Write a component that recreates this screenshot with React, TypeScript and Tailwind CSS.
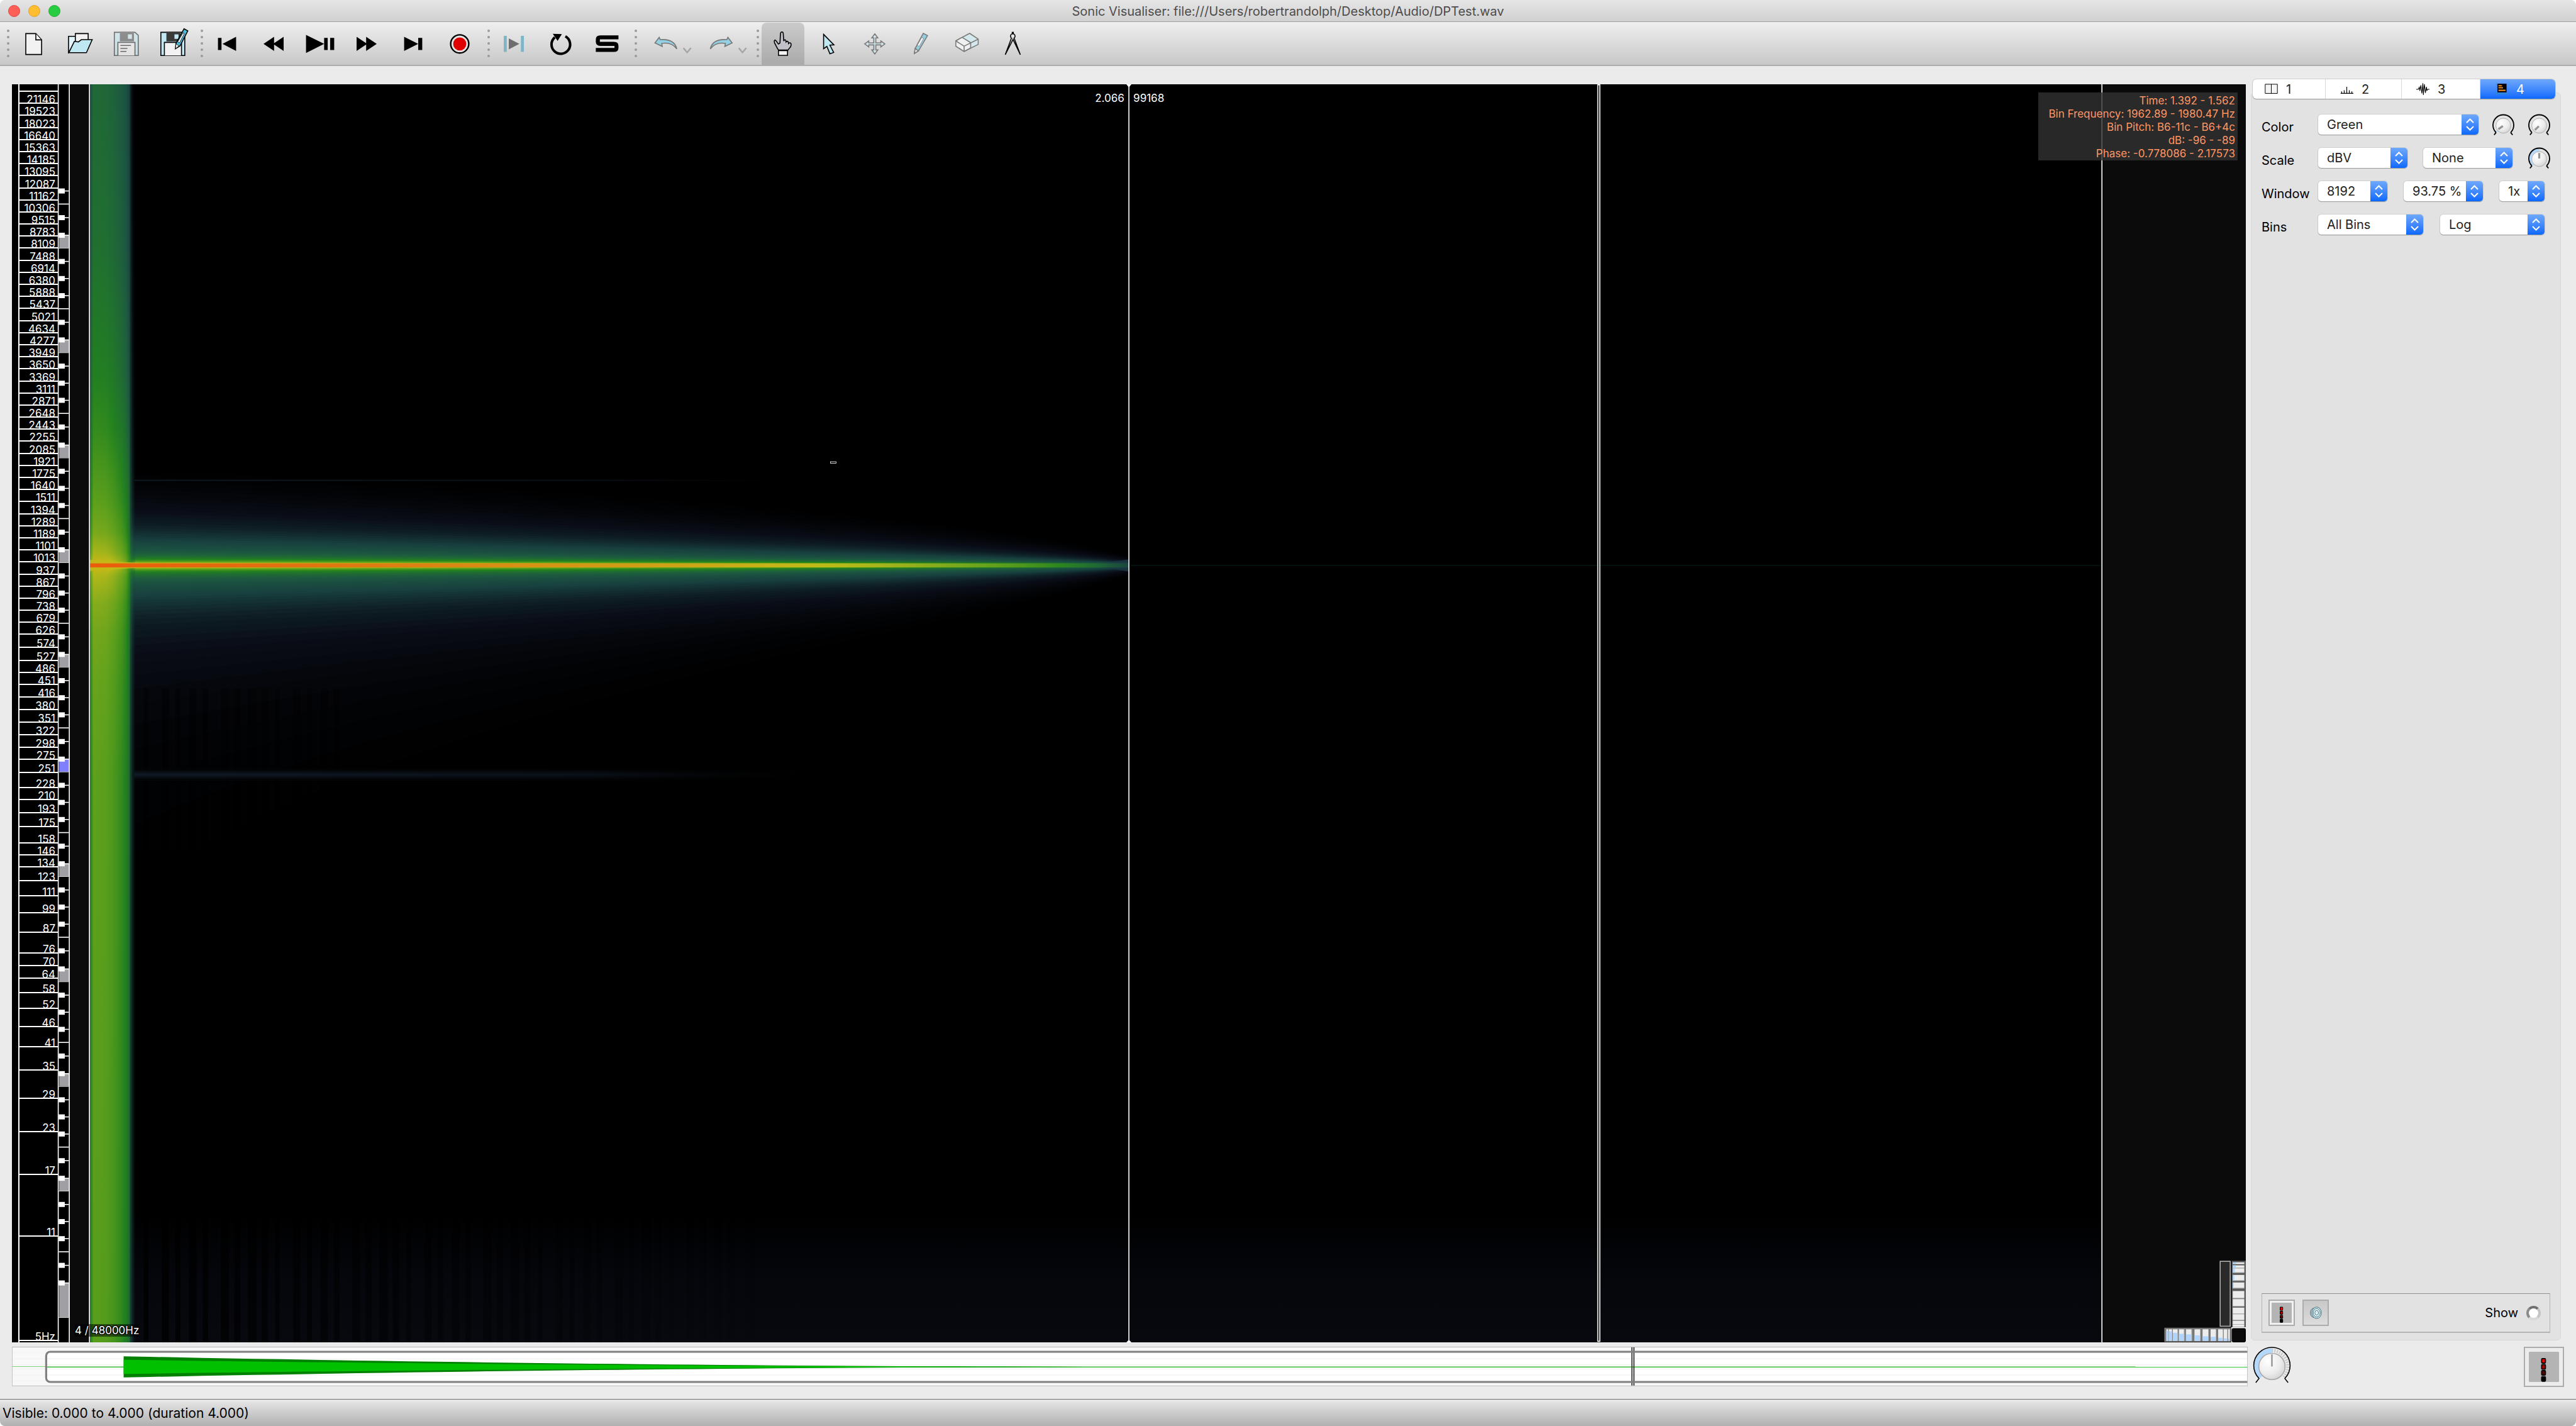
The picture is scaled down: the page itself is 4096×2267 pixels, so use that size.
import type { ReactNode } from 'react';

// Geometry of the spectrogram pane, in drawing units.
const PANE_W = 4440;
const PANE_H = 2500;
const BEAM_Y = 956;
const BEAM_START = 155;
const BEAM_END = 2220;
const OCTAVE = 208;

// [label, bottom edge of its row]
const frequencies: [string, number][] = [
  ['', 15], ['21146', 39], ['19523', 63], ['18023', 87], ['16640', 111], ['15363', 135],
  ['14185', 159], ['13095', 183], ['12087', 207], ['11162', 231], ['10306', 255], ['9515', 279],
  ['8783', 303], ['8109', 327], ['7488', 351], ['6914', 375], ['6380', 399], ['5888', 423],
  ['5437', 447], ['5021', 471], ['4634', 495], ['4277', 519], ['3949', 543], ['3650', 567],
  ['3369', 591], ['3111', 615], ['2871', 639], ['2648', 663], ['2443', 687], ['2255', 711],
  ['2085', 735], ['1921', 759], ['1775', 783], ['1640', 807], ['1511', 831], ['1394', 855],
  ['1289', 879], ['1189', 903], ['1101', 927], ['1013', 951], ['937', 975], ['867', 999],
  ['796', 1023], ['738', 1047], ['679', 1071], ['626', 1095], ['574', 1121], ['527', 1147],
  ['486', 1171], ['451', 1195], ['416', 1219], ['380', 1245], ['351', 1269], ['322', 1295],
  ['298', 1319], ['275', 1343], ['251', 1369], ['228', 1399], ['210', 1423], ['193', 1449],
  ['175', 1477], ['158', 1509], ['146', 1533], ['134', 1557], ['123', 1585], ['111', 1615],
  ['99', 1649], ['87', 1687], ['76', 1729], ['70', 1753], ['64', 1779], ['58', 1807],
  ['52', 1839], ['46', 1875], ['41', 1915], ['35', 1961], ['29', 2017], ['23', 2083],
  ['17', 2169], ['11', 2291], ['5Hz', 2499],
];

// dB -> colour
const colourStops: [number, number, number, number][] = [
  [-130, 0, 0, 0],
  [-122, 2, 3, 6],
  [-109, 10, 14, 24],
  [-100, 15, 31, 38],
  [-87, 24, 64, 63],
  [-69, 29, 90, 64],
  [-60, 32, 106, 53],
  [-49, 34, 130, 30],
  [-36, 94, 160, 28],
  [-30, 128, 170, 28],
  [-21, 192, 188, 24],
  [-9, 216, 144, 20],
  [0, 234, 92, 12],
];

function colourAt(level: number) {
  if (level <= colourStops[0][0]) return 'rgb(0,0,0)';
  for (let i = 1; i < colourStops.length; i++) {
    const [hi, r2, g2, b2] = colourStops[i];
    if (level <= hi) {
      const [lo, r1, g1, b1] = colourStops[i - 1];
      const f = (level - lo) / (hi - lo);
      const mix = (a: number, b: number) => Math.round(a + (b - a) * f);
      return `rgb(${mix(r1, r2)},${mix(g1, g2)},${mix(b1, b2)})`;
    }
  }
  return 'rgb(234,92,12)';
}

function interpolate(points: [number, number][], v: number) {
  if (v <= points[0][0]) return points[0][1];
  for (let i = 1; i < points.length; i++) {
    if (v <= points[i][0]) {
      const [x1, y1] = points[i - 1];
      const [x2, y2] = points[i];
      return y1 + ((y2 - y1) * (v - x1)) / (x2 - x1);
    }
  }
  return points[points.length - 1][1];
}

// Outline of the region around the tone that is louder than the given level
function contour(level: number) {
  const upper: string[] = [];
  const lower: string[] = [];
  const steps = 80;
  for (let i = 0; i <= steps; i++) {
    const t = Math.min(0.9995, 1 - Math.pow(1 - i / steps, 1.6));
    const x = BEAM_START + t * (BEAM_END - BEAM_START);
    const amp = 40 * Math.log10(1 - Math.max(0, t - 0.02));
    const df = Math.min(0.85, 0.043 * Math.pow(2, (amp - 49 - level) / 18));
    upper.push(`${x.toFixed(1)} ${(BEAM_Y - OCTAVE * Math.log2(1 + df)).toFixed(1)}`);
    lower.unshift(`${x.toFixed(1)} ${(BEAM_Y - OCTAVE * Math.log2(1 - df)).toFixed(1)}`);
  }
  return `M${upper.concat(lower).join('L')}Z`;
}

const onsetLevel: [number, number][] = [
  [0, -61], [332, -57], [582, -50], [682, -45], [780, -39], [832, -36], [890, -31], [932, -24],
  [948, -19], [956, -14], [964, -19], [976, -23], [1032, -29], [1090, -32], [1182, -34],
  [1382, -36], [2500, -37],
];
const onsetFade: [number, number][] = [
  [155, -14], [160, 0], [185, -1], [201, -4], [216, -9], [225, -14], [233, -26], [238, -42], [243, -66],
];

function Onset() {
  const slices = Array.from({ length: 30 }, (_, i) => 155 + i * 3);
  return (
    <g>
      <defs>
        {slices.map((x) => (
          <linearGradient key={x} id={`onset-${x}`} x1="0" y1="0" x2="0" y2={PANE_H} gradientUnits="userSpaceOnUse">
            {onsetLevel.map(([y, level]) => (
              <stop key={y} offset={y / PANE_H} stopColor={colourAt(level + interpolate(onsetFade, x))} />
            ))}
          </linearGradient>
        ))}
      </defs>
      {slices.map((x) => (
        <rect key={x} x={x} y="0" width={x > 230 ? 3 : 4} height={PANE_H} fill={`url(#onset-${x})`} opacity={x > 230 ? (245 - x) / 16 : 1} />
      ))}
    </g>
  );
}

function Beam() {
  const levels = Array.from({ length: 57 }, (_, i) => -130 + i * 2);
  const peak = Array.from({ length: 30 }, (_, i) => i / 29);
  return (
    <g>
      <defs>
        <linearGradient id="beam-peak" x1={BEAM_START} x2={BEAM_END} y1="0" y2="0" gradientUnits="userSpaceOnUse">
          {peak.map((t) => (
            <stop key={t} offset={t} stopColor={colourAt(40 * Math.log10(Math.max(0.008, 1 - t)))} />
          ))}
        </linearGradient>
        <linearGradient id="beam-tip" x1="0" x2="1">
          <stop offset="0" stopColor="#1c3a48" stopOpacity="0" />
          <stop offset="1" stopColor="#1c3a48" stopOpacity="0.8" />
        </linearGradient>
      </defs>
      {levels.map((level) => (
        <path key={level} d={contour(level)} fill={colourAt(level + 1)} />
      ))}
      <path d="M2130 956L2219 944V968Z" fill="url(#beam-tip)" />
      <path d="M2160 954H2219V959H2160Z" fill="#1d5a50" opacity="0.7" />
    </g>
  );
}

function Spectrogram() {
  const stripes = Array.from({ length: 42 }, (_, i) => ({
    x: 262 + i * 29 + ((i * 7) % 9),
    w: 9 + ((i * 5) % 9),
    o: 0.75 * (1 - i / 42),
  }));
  return (
    <g>
      <defs>
        <linearGradient id="floor" x1="0" y1="0" x2="0" y2="1">
          <stop offset="0" stopColor="#06080f" stopOpacity="0" />
          <stop offset="0.5" stopColor="#06080f" stopOpacity="0.8" />
          <stop offset="1" stopColor="#07090f" />
        </linearGradient>
        <linearGradient id="partial" x1="0" x2="1">
          <stop offset="0" stopColor="#101a26" />
          <stop offset="0.65" stopColor="#0b111a" />
          <stop offset="1" stopColor="#000" stopOpacity="0" />
        </linearGradient>
        <linearGradient id="partial-edge" x1="0" y1="0" x2="0" y2="1">
          <stop offset="0" stopColor="#000" />
          <stop offset="0.5" stopColor="#000" stopOpacity="0" />
          <stop offset="1" stopColor="#000" />
        </linearGradient>
      </defs>
      <rect x="155" y="0" width="3998" height={PANE_H} fill="#000" />
      <rect x="155" y="2240" width="3998" height="260" fill="url(#floor)" />
      {stripes.map((s) => (
        <rect key={s.x} x={s.x} y="2200" width={s.w} height="300" fill="#000" opacity={s.o} />
      ))}
      <Beam />
      {stripes.slice(0, 14).map((s) => (
        <rect key={s.x} x={s.x} y="1200" width={s.w} height="350" fill="#000" opacity={s.o * 0.5} />
      ))}
      <rect x="243" y="1361" width="1400" height="22" fill="url(#partial)" />
      <rect x="243" y="1361" width="1400" height="22" fill="url(#partial-edge)" />
      <rect x="243" y="786" width="1400" height="2" fill="url(#partial)" />
      <rect x="2222" y="955" width="1931" height="2" fill="#04130f" />
      <Onset />
      <path d="M155 945L250 951V961L155 967Z" fill="#c4b818" opacity="0.8" />
      <rect x="155" y="952" width={BEAM_END - 155} height="8" fill="url(#beam-peak)" />
    </g>
  );
}

function Keyboard() {
  const marks: ReactNode[] = [];
  for (let octave = 0; octave < 12; octave++) {
    const top = Math.round(92 + octave * 208.2);
    if (octave > 0) {
      const height = octave === 11 ? 68 : 25;
      marks.push(
        <g key={`c${octave}`}>
          <rect x="94" y={top} width="20" height={height} fill={octave === 6 ? '#8080ff' : '#a0a0a4'} />
          <rect x="93" y={top + height} width="20" height="1" fill="#fff" />
        </g>,
      );
    }
    [0, 52, 86, 120, 146, 173].forEach((offset) => {
      const y = top + offset;
      if (y < 205 || y > 2385) return;
      marks.push(
        <g key={y} fill="#fff">
          <rect x="93" y={y - 1} width="20" height="2" />
          {offset !== 146 && <rect x="93" y={y - 5} width="12" height="10" />}
        </g>,
      );
    });
  }
  return <g>{marks}</g>;
}

const wheelColumns = [
  [4282, 3, 3], [4287, 6, 4], [4295, 9, 7], [4307, 10, 9], [4321, 11, 10], [4338, 11, 12],
  [4354, 11, 14], [4370, 10, 15], [4385, 9, 17], [4396, 7, 18], [4405, 3, 19],
];
const wheelRows = [
  [2341, 3, 7], [2347, 5, 6], [2353, 8, 4], [2366, 11, 3], [2381, 11, 2], [2398, 14, 0],
  [2414, 14, 0], [2431, 12, 0], [2444, 11, 0], [2457, 7, 0], [2465, 4, 0],
];

function Wheels() {
  return (
    <g>
      <rect x="4389" y="2339" width="20" height="129" fill="#2a2a2a" stroke="#b0b0b0" strokeWidth="2" />
      <rect x="4412" y="2338" width="28" height="132" fill="#5a5a5a" />
      {wheelRows.map(([y, h, blue]) => (
        <g key={y}>
          <rect x="4414" y={y} width="23" height={h} fill="#ececec" />
          <rect x="4414" y={y} width={blue} height={h} fill="#b0d4fb" />
          <rect x="4414" y={y + h} width="23" height="1" fill="#c0c0c0" />
        </g>
      ))}
      <rect x="4278" y="2471" width="132" height="28" fill="#777" />
      {wheelColumns.map(([x, w, top]) => (
        <g key={x}>
          <rect x={x} y="2474" width={w} height="23" fill="#ececec" />
          <rect x={x} y={2474 + top} width={w} height={23 - top} fill="#b0d4fb" />
          <rect x={x + w} y="2474" width="1" height="23" fill="#c8c8c8" />
        </g>
      ))}
      <rect x="4411" y="2470" width="29" height="30" fill="#fff" />
      <rect x="4412" y="2472" width="28" height="28" rx="3" fill="#000" />
      <rect x="4414" y="2474" width="23" height="23" fill="#0b0b0b" />
    </g>
  );
}

function Pane() {
  return (
    <div className="relative mr-[3px] flex min-h-0 flex-1 bg-black text-[17px] text-white">
      <svg className="absolute inset-0 h-full w-full" viewBox={`0 0 ${PANE_W} ${PANE_H}`} preserveAspectRatio="none" aria-hidden="true">
        <Spectrogram />
        <rect x="115" y="0" width="38" height={PANE_H} fill="#0b0b0b" />
        <Keyboard />
        <rect x="91" y="0" width="2" height={PANE_H} fill="#fff" />
        <rect x="113" y="0" width="2" height={PANE_H} fill="#fff" />
        <rect x="153" y="0" width="2" height={PANE_H} fill="#fff" />
        <rect x="4153" y="0" width="287" height={PANE_H} fill="#0b0b0b" />
        <rect x="4153" y="0" width="2" height={PANE_H} fill="#fff" />
        <rect x="2219" y="0" width="2" height={PANE_H} fill="#fff" />
        <path d="M2215 0H2225L2221 5H2219ZM2215 2500H2225L2221 2496H2219Z" fill="#fff" />
        <rect x="3151" y="0" width="6" height="2499" fill="#fff" />
        <rect x="3153" y="2" width="2" height="2495" fill="#000" />
        <rect x="1627" y="750" width="11" height="3" fill="none" stroke="#fff" strokeWidth="1" />
        <Wheels />
      </svg>
      <div className="relative ml-[10px] w-[64px] border-l-2 border-white">
        {frequencies.map(([label, bottom], i) => (
          <div
            key={bottom}
            className="flex items-end justify-end border-b-2 border-white pr-[5px] leading-[10px]"
            style={{ height: `${((bottom - (i ? frequencies[i - 1][1] : 0)) / PANE_H) * 100}%` }}
          >
            {label}
          </div>
        ))}
      </div>
      <span className="absolute right-[50.2%] top-[12px] leading-[20px]">2.066</span>
      <span className="absolute left-[50.2%] top-[12px] leading-[20px]">99168</span>
      <span className="absolute bottom-[9px] left-[100px] bg-black/50 leading-[20px] [text-shadow:1px_1px_1px_#000,-1px_-1px_1px_#000,1px_-1px_1px_#000,-1px_1px_1px_#000]">
        4 / 48000Hz
      </span>
      <div className="absolute right-[13px] top-[13px] w-[317px] whitespace-nowrap bg-[#323232]/80 pr-[4px] pt-[3px] text-right leading-[21px] text-[#ff9664]">
        <p>Time: 1.392 - 1.562</p>
        <p>Bin Frequency: 1962.89 - 1980.47 Hz</p>
        <p>Bin Pitch: B6-11c - B6+4c</p>
        <p>dB: -96 - -89</p>
        <p>Phase: -0.778086 - 2.17573</p>
      </div>
    </div>
  );
}

function envelope(height: number) {
  const top: string[] = [];
  const bottom: string[] = [];
  for (let i = 0; i <= 40; i++) {
    const t = i / 40;
    const h = height * Math.pow(1 - t, 2);
    top.push(`${222 + t * 2066} ${40 - h}`);
    bottom.unshift(`${222 + t * 2066} ${40 + h}`);
  }
  return `M${top.concat(bottom).join('L')}Z`;
}

function Overview() {
  return (
    <svg className="mt-[7px] h-[64px] w-full shrink-0" viewBox="0 0 4444 80" preserveAspectRatio="none" role="img" aria-label="Overview">
      <rect x="0" y="0" width="4444" height="80" fill="#f8f8f8" />
      <rect x="68" y="10" width="4500" height="60" rx="8" fill="#fff" />
      {[11, 23, 35, 43, 55, 67].map((y) => (
        <rect key={y} x="0" y={y} width="4444" height="2" fill="#f4f4f4" />
      ))}
      <rect x="0" y="39" width="68" height="1" fill="#60cc60" />
      <rect x="68" y="39" width="4153" height="1" fill="#80c880" />
      <rect x="68" y="40" width="4376" height="1" fill="#00b800" />
      <path d={envelope(21)} fill="#008000" />
      <path d={envelope(14)} fill="#00c000" />
      <g fill="#262626">
        <rect x="3219" y="1" width="2" height="77" />
        <rect x="3223" y="1" width="2" height="77" />
      </g>
      <rect x="68" y="10" width="4500" height="60" rx="8" fill="none" stroke="#808080" strokeWidth="4" />
      <rect x="0" y="0" width="4444" height="1" fill="#a8a8a8" />
      <rect x="0" y="0" width="1" height="79" fill="#b8b8b8" />
      <rect x="4443" y="0" width="1" height="79" fill="#b8b8b8" />
      <rect x="0" y="77" width="4444" height="2" fill="#c8c8c8" />
    </svg>
  );
}

function Icon({ children, wide = false, faded = false }: { children: ReactNode; wide?: boolean; faded?: boolean }) {
  return (
    <svg
      className={`${wide ? 'w-[88px]' : 'w-[48px]'} h-[48px] overflow-visible ${faded ? 'opacity-50' : ''}`}
      viewBox={wide ? '0 0 110 60' : '0 0 60 60'}
      fill="none"
      stroke="#000"
      strokeWidth="2"
      aria-hidden="true"
    >
      {children}
    </svg>
  );
}

function Disk() {
  return (
    <>
      <path d="M6 8H47L53.5 14V54H6Z" fill="#c0e8f2" />
      <path d="M18 8H44V25H18Z" fill="#3a3a3a" stroke="#3a3a3a" />
      <path d="M33 12H41V21H33Z" fill="#c0e8f2" stroke="none" />
      <path d="M13 54V28H47V54" fill="#f2f2f2" />
    </>
  );
}

const curvedArrow = 'M30.5 29L39 18L41 22.5C60 21 71 28 74 41C66 30 56 28 44 30L45 36Z';

const fileTools: [string, ReactNode][] = [
  ['New', <Icon><path d="M15 10.5H35L46.500 23V52H15Z" fill="#f2f2f2" /><path d="M35 10.500V23H46" fill="#fff" /></Icon>],
  ['Open', (
    <Icon>
      <path d="M7.500 48V16H21V30Z" fill="#e2f5fa" />
      <path d="M21 30V10.500H46.500V30Z" fill="#f2f2f2" />
      <path d="M8 48.500H43L54.500 22.500H33L27 27L19 26Z" fill="#c0e8f2" />
    </Icon>
  )],
  ['Save', <Icon faded><Disk /><path d="M18 34H39M18 40H32M18 46H30" /></Icon>],
  ['Save As', (
    <Icon>
      <Disk />
      <path d="M52 1L59.500 5L44 35L35 40.500L36 30Z" fill="#4fbadc" />
      <path d="M50 9L52.500 10.500L43 29L39.500 27Z" fill="#fff" strokeWidth="1" />
      <path d="M36 31L42 35L35 40.500Z" fill="#fff" strokeWidth="1" />
    </Icon>
  )],
];

const transportTools: [string, ReactNode][] = [
  ['Rewind to Start', <Icon><path d="M12 19H19V43H12ZM21 31L48 17V45Z" fill="#000" stroke="none" /></Icon>],
  ['Rewind', <Icon><path d="M10 31L31 17V45ZM29 31L50 17V45Z" fill="#000" stroke="none" /></Icon>],
  ['Play / Pause', <Icon><path d="M2 13L38 31L2 49ZM38 19H45V43H38ZM50 19H58V43H50Z" fill="#000" stroke="none" /></Icon>],
  ['Fast Forward', <Icon><path d="M10 17L31 31L10 45ZM29 17L50 31L29 45Z" fill="#000" stroke="none" /></Icon>],
  ['Fast Forward to End', <Icon><path d="M12 17L40 31L12 45ZM40 19H48V43H40Z" fill="#000" stroke="none" /></Icon>],
  ['Record', <Icon><circle cx="30" cy="31" r="18" fill="#e4e4e4" strokeWidth="3" /><circle cx="30" cy="31" r="13" fill="#e00000" stroke="none" /></Icon>],
];

const modeTools: [string, ReactNode][] = [
  ['Constrain Playback to Selection', (
    <Icon>
      <path d="M10 15H16V47H10ZM44 15H50V47H44Z" fill="#7eb6c8" stroke="none" />
      <path d="M20 20L41 31L20 42Z" fill="#6e6e6e" stroke="none" />
    </Icon>
  )],
  ['Loop Playback', (
    <Icon>
      <path d="M19 18A18.500 18.500 0 1 0 40 16" strokeWidth="5" />
      <path d="M15 11L33 11.500L24.500 25Z" fill="#000" stroke="none" />
    </Icon>
  )],
  ['Solo', <Icon><path d="M53 18H17Q12 18 12 22V27Q12 31 17 31H44Q49 31 49 35V39Q49 43 44 43H8" strokeWidth="8" /></Icon>],
];

const editTools: [string, ReactNode][] = [
  ['Undo', (
    <Icon wide>
      <path d={curvedArrow} fill="#94d0e2" stroke="#777" />
      <path d="M87 39L94.500 48L102 39" stroke="#a4a4a4" strokeWidth="3" />
    </Icon>
  )],
  ['Redo', (
    <Icon wide>
      <path d={curvedArrow} fill="#94d0e2" stroke="#777" transform="translate(104.500 0) scale(-1 1)" />
      <path d="M87 39L94.500 48L102 39" stroke="#a4a4a4" strokeWidth="3" />
    </Icon>
  )],
];

const pointerTools: [string, ReactNode][] = [
  ['Navigate', (
    <Icon>
      <path d="M21 42C18 38 17 35 15 31C12 27 12 23 14 22C17 22 18 28 21 30L24 28L25 9C26 5 30 5 30.500 9L31.500 24C33 20 36 21 36 26C39 23 41 25 41 29C44 26 47 28 46 33C45 38 42 38 40 42Z" fill="#c0c0c6" />
      <path d="M21 43H39V52.500H21Z" fill="#f4f4f4" />
    </Icon>
  )],
  ['Select', <Icon><path d="M19.500 12L40 33L32 33.500L39.500 48L32 50.500L26 36L19.500 40.500Z" fill="#c0e8f2" /></Icon>],
  ['Edit', <Icon><path d="M30 11L36 19H32V29H42V25L50 31L42 37V33H32V43H36L30 51L24 43H28V33H18V37L10 31L18 25V29H28V19H24Z" fill="#d2e6ec" stroke="#7a7a7a" /></Icon>],
  ['Draw', (
    <Icon>
      <g stroke="#7a7a7a">
        <path d="M35 10L43.500 14.500L25.500 45L17.500 50L19 40Z" fill="#94d0e2" />
        <path d="M32 18L36 20L27 36L23 34Z" fill="#f2f2f2" strokeWidth="1" />
        <path d="M19 40L25.500 45L17.500 50Z" fill="#f2f2f2" />
      </g>
    </Icon>
  )],
  ['Erase', (
    <Icon>
      <g stroke="#7a7a7a" strokeLinejoin="round">
        <path d="M8.500 25L36 10L53 21.500V32L25 46L8.500 35.500Z" fill="#d4e8ee" />
        <path d="M8.500 25L21 18L38 28.500V39L25 46L8.500 35.500Z" fill="#f0f0f0" />
        <path d="M8.500 25L25 35.500V46M25 35.500L53 21.500" />
      </g>
    </Icon>
  )],
  ['Measure', (
    <Icon>
      <path d="M30.500 7V11" strokeWidth="4" />
      <circle cx="30.500" cy="15.500" r="4.500" fill="#e4e4e4" />
      <path d="M28 19L15.500 52.500L31 22L45.500 52.500L33 19" fill="#e4e4e4" />
    </Icon>
  )],
];

type ToolGroupProps = {
  name: string;
  tools: [string, ReactNode][];
  gap?: string;
  wide?: boolean;
  active?: string;
};

function ToolGroup({ name, tools, gap = 'gap-[6px]', wide = false, active }: ToolGroupProps) {
  return (
    <div className="mr-[9px] flex h-full gap-[3px]" role="group" aria-label={name}>
      <div className="flex w-[6px] flex-col items-center justify-center gap-[6px]">
        {[0, 1, 2, 3, 4].map((dot) => (
          <span key={dot} className="h-[4px] w-[4px] rounded-full bg-[#9a9a9a]" />
        ))}
      </div>
      <div className={`flex ${gap}`}>
        {tools.map(([label, icon]) => (
          <button
            key={label}
            type="button"
            aria-label={label}
            className={`flex items-center justify-center ${wide ? 'w-[88px]' : 'w-[68px]'} ${active === label ? 'mt-[1px] rounded-t-[8px] bg-black/15' : ''}`}
          >
            {icon}
          </button>
        ))}
      </div>
    </div>
  );
}

function Knob({ label, angle, small = false }: { label: string; angle: number; small?: boolean }) {
  const sweep = (angle + 135) / 270;
  // 31.5 radius over three quarters of a turn
  const length = 148.4;
  return (
    <span className={`relative block shrink-0 ${small ? 'h-[33px] w-[35px]' : 'h-[58px] w-[61px]'}`}>
      <svg className="h-full w-full overflow-visible" viewBox="0 0 76 72" fill="none" aria-hidden="true">
        <defs>
          <radialGradient id="knob-face" cx="0.35" cy="0.3" r="0.8">
            <stop offset="0" stopColor="#fff" />
            <stop offset="0.6" stopColor="#ececec" />
            <stop offset="1" stopColor="#cfcfcf" />
          </radialGradient>
        </defs>
        {!small && <path d="M38 7.500A31.500 31.500 0 0 1 60.300 61.300" stroke="#c4c4c4" strokeWidth="7" strokeDasharray="2 3" />}
        <path d="M15.700 61.300A31.500 31.500 0 1 1 60.300 61.300" stroke="#b4d8fc" strokeWidth="9" strokeDasharray={`${length * sweep} 400`} />
        <circle cx="38" cy="39" r="26" fill="url(#knob-face)" stroke="#a8a8a8" strokeWidth="2" />
        <path d="M12 62A36 36 0 1 1 64 62" stroke="#000" strokeWidth={small ? 4 : 2} />
        <path d="M13 62L6 71M63 62L70 71" stroke="#000" strokeWidth={small ? 4 : 2} />
        <path d={small ? 'M38 37V18' : 'M38 39V15'} stroke="#949494" strokeWidth={small ? 7 : 3} transform={`rotate(${angle} 38 39)`} />
      </svg>
      <input type="range" aria-label={label} min={-135} max={135} defaultValue={angle} className="absolute inset-0 h-full w-full opacity-0" />
    </span>
  );
}

function Dropdown({ label, value, width }: { label: string; value: string; width: string }) {
  return (
    <span className={`relative block h-[32px] shrink-0 overflow-hidden rounded-[5px] bg-white shadow-[0_1px_1px_#9a9a9a,0_0_0_1px_#cfcfcf] ${width}`}>
      <select aria-label={label} defaultValue={value} className="h-full w-full appearance-none bg-transparent pl-[14px] text-[20px] leading-[30px] text-[#222]">
        <option>{value}</option>
      </select>
      <span className="pointer-events-none absolute inset-y-0 right-0 flex w-[27px] items-center justify-center bg-linear-to-b from-[#6ea8fb] to-[#0868fd]">
        <svg className="h-[20px] w-[13px]" viewBox="0 0 13 20" fill="none" stroke="#fff" strokeWidth="2" aria-hidden="true">
          <path d="M1 7L6.500 1.500L12 7M1 13L6.500 18.500L12 13" />
        </svg>
      </span>
    </span>
  );
}

function Leds() {
  return (
    <svg className="h-full w-full" viewBox="0 0 40 40" aria-hidden="true">
      <rect x="0" y="0" width="40" height="40" rx="1" fill="#b4b4b4" />
      {['#ff0000', '#b40000', '#5a0000', '#000'].map((fill, i) => (
        <rect key={fill} x="17" y={9 + i * 8} width="5" height="6" rx="1" fill={fill} stroke="#000" strokeWidth="1.500" />
      ))}
    </svg>
  );
}

const tabs: { label: string; size: string; icon: ReactNode }[] = [
  {
    label: '1',
    size: 'w-[116px] pl-[19px]',
    icon: <path d="M1 1H25V19H1ZM13 1V19" fill="#f4f4f4" stroke="#000" strokeWidth="1.200" />,
  },
  {
    label: '2',
    size: 'w-[121px] pl-[23px]',
    icon: <path d="M1 19H26M3 19V15M8 19V13M13 19V6M18 19V13M23 19V15" stroke="#000" strokeWidth="1.500" />,
  },
  {
    label: '3',
    size: 'w-[125px] pl-[23px]',
    icon: <path d="M0 11H4L6 7L7 14L9 3L11 19L13 -1L14 22L16 1L18 18L20 6L21 14L22 11H26" stroke="#000" strokeWidth="1.300" />,
  },
  {
    label: '4',
    size: 'w-[119px] pl-[23px]',
    icon: (
      <>
        <rect x="5" y="0" width="18" height="17" fill="#000" />
        <path d="M7 4H14M7 8H16M7 13H21" stroke="#f08a1a" strokeWidth="2.500" />
        <path d="M3 -1V22M0 19.500H26" stroke="#2aa09c" strokeWidth="1" />
      </>
    ),
  },
];

const rows: { label: string; width: string; controls: ReactNode }[] = [
  {
    label: 'Color',
    width: 'w-[369px]',
    controls: (
      <>
        <Dropdown label="Color" value="Green" width="w-[255px]" />
        <Knob small label="Color rotation" angle={-125} />
        <Knob small label="Threshold" angle={-135} />
      </>
    ),
  },
  {
    label: 'Scale',
    width: 'w-[369px]',
    controls: (
      <>
        <Dropdown label="Scale" value="dBV" width="w-[142px]" />
        <Dropdown label="Normalization" value="None" width="w-[142px]" />
        <Knob small label="Gain" angle={0} />
      </>
    ),
  },
  {
    label: 'Window',
    width: 'w-[360px]',
    controls: (
      <>
        <Dropdown label="Window" value="8192" width="w-[110px]" />
        <Dropdown label="Overlap" value="93.75 %" width="w-[126px]" />
        <Dropdown label="Oversampling" value="1x" width="w-[72px]" />
      </>
    ),
  },
  {
    label: 'Bins',
    width: 'w-[360px]',
    controls: (
      <>
        <Dropdown label="Bins" value="All Bins" width="w-[167px]" />
        <Dropdown label="Bin scale" value="Log" width="w-[166px]" />
      </>
    ),
  },
];

function LayerPanel() {
  return (
    <aside className="flex w-[522px] shrink-0 flex-col pl-[5px] pr-[19px] pt-[21px]">
      <div className="relative z-10 ml-[3px] flex h-[31px] w-[481px] overflow-hidden rounded-[6px] bg-white shadow-[0_1px_1px_#9a9a9a,0_0_0_1px_#cfcfcf]" role="tablist">
        {tabs.map((tab) => {
          const selected = tab.label === '4';
          return (
            <button
              key={tab.label}
              type="button"
              role="tab"
              aria-selected={selected}
              className={`flex items-center gap-[13px] text-[20px] ${tab.size} ${selected ? 'bg-linear-to-b from-[#6ea8fb] to-[#0868fd] text-white' : 'border-r border-[#d8d8d8] text-[#222]'}`}
            >
              <svg className="h-[18px] w-[21px] overflow-visible" viewBox="0 0 26 22" fill="none" aria-hidden="true">
                {tab.icon}
              </svg>
              {tab.label}
            </button>
          );
        })}
      </div>
      <section className="-mt-[10px] mr-[5px] flex flex-1 flex-col justify-between rounded-[6px] border border-[#d8d8d8] bg-[#e2e2e2] px-[16px] pb-[11px] pt-[34px]">
        <div>
          {rows.map((row) => (
            <div key={row.label} className="flex h-[53px] items-start">
              <span className="w-[90px] pt-[4px] text-[20px] leading-[32px] text-black">{row.label}</span>
              <div className={`flex justify-between ${row.width}`}>{row.controls}</div>
            </div>
          ))}
        </div>
        <div className="flex h-[63px] items-center border border-b-2 border-[#b4b4b4] border-t-[#909090] px-[10px]">
          <button type="button" aria-label="Layer level" className="h-[42px] w-[42px] border-2 border-[#acacac] bg-[#f0f0f0] p-[3px]">
            <Leds />
          </button>
          <button type="button" aria-label="Layer playback" className="ml-[12px] flex h-[42px] w-[42px] items-center justify-center border-2 border-[#acacac] bg-linear-to-b from-[#c8c8c8] to-[#dcdcdc]">
            <svg className="h-[20px] w-[20px]" viewBox="0 0 24 24" fill="none" stroke="#3c5a64" aria-hidden="true">
              <ellipse cx="9" cy="12" rx="7" ry="9" fill="#b8ccd2" />
              <ellipse cx="14" cy="12" rx="9" ry="11" fill="#c0e8f2" />
              <ellipse cx="14" cy="12" rx="6.500" ry="8" fill="#e2f5fa" />
              <ellipse cx="14" cy="12" rx="3.500" ry="4.500" fill="#d8f0f6" />
            </svg>
          </button>
          <label htmlFor="show-layer" className="ml-auto mr-[13px] text-[20px] text-black">
            Show
          </label>
          <input
            id="show-layer"
            type="checkbox"
            className="mr-[4px] h-[23px] w-[23px] appearance-none rounded-full border-[4px] border-b-[#d8d8d8] border-l-[#8a8a8a] border-r-[#c4c4c4] border-t-[#707070] bg-white"
          />
        </div>
      </section>
      <div className="mb-[19px] mt-[10px] flex h-[64px] shrink-0 items-start justify-between pl-[3px]">
        <Knob label="Playback speed" angle={0} />
        <button type="button" aria-label="Output level" className="h-[64px] w-[64px] border-2 border-[#acacac] bg-[#ececec] p-[6px]">
          <Leds />
        </button>
      </div>
    </aside>
  );
}

export default function App() {
  return (
    <div className="bg-white font-['Inter',sans-serif]">
      <div className="flex h-screen flex-col overflow-hidden rounded-[8px] bg-[#ebebeb]">
        <header className="relative flex h-[35px] shrink-0 items-center justify-center border-b border-[#a0a0a0] bg-linear-to-b from-[#e6e6e6] to-[#d0d0d0]">
          <div className="absolute left-[13px] flex gap-[13px]">
            <button type="button" aria-label="Close" className="h-[19px] w-[19px] rounded-full border border-[#e2463f] bg-[#fe5f57]" />
            <button type="button" aria-label="Minimize" className="h-[19px] w-[19px] rounded-full border border-[#e0a12a] bg-[#febe2f]" />
            <button type="button" aria-label="Zoom" className="h-[19px] w-[19px] rounded-full border border-[#1fae2f] bg-[#28cc41]" />
          </div>
          <h1 className="pt-[2px] text-[20px] leading-[34px] text-[#4c4c4c]">
            Sonic Visualiser: file:///Users/robertrandolph/Desktop/Audio/DPTest.wav
          </h1>
        </header>
        <nav className="flex h-[70px] shrink-0 border-b-2 border-[#adadad] bg-linear-to-b from-[#efefef] to-[#c8c8c8] pl-[10px]" aria-label="Tools">
          <ToolGroup name="File" tools={fileTools} />
          <ToolGroup name="Transport" tools={transportTools} />
          <ToolGroup name="Play mode" tools={modeTools} />
          <ToolGroup name="Edit" tools={editTools} gap="gap-0" wide />
          <ToolGroup name="Pointer" tools={pointerTools} gap="gap-[5px]" active="Navigate" />
        </nav>
        <main className="flex min-h-0 flex-1">
          <div className="flex min-w-0 flex-1 flex-col pb-[19px] pl-[19px] pt-[29px]">
            <Pane />
            <Overview />
          </div>
          <LayerPanel />
        </main>
        <footer className="h-[43px] shrink-0 border-t border-[#707070] bg-linear-to-b from-[#e8e8e8] to-[#b0b0b0] pl-[4px] text-[21px] leading-[44px] text-black">
          Visible: 0.000 to 4.000 (duration 4.000)
        </footer>
      </div>
    </div>
  );
}
